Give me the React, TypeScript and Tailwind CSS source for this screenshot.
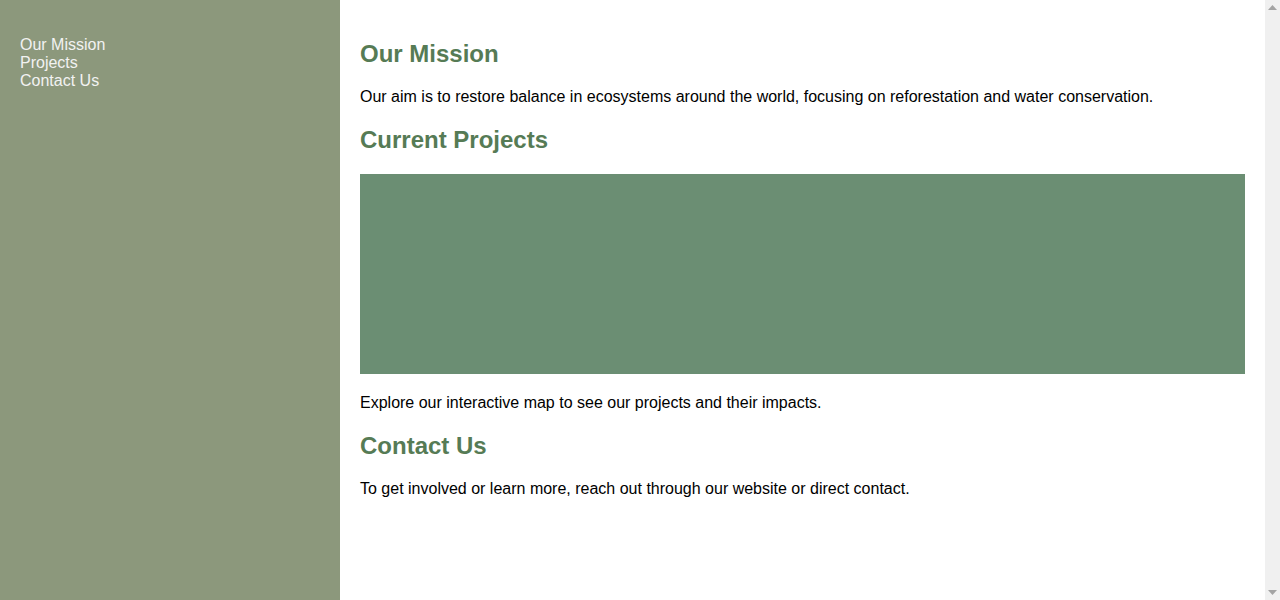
const NAV = ['Our Mission', 'Projects', 'Contact Us'];

export default function App() {
  return (
    <div className="flex h-screen bg-white font-['Liberation_Sans',Arial,sans-serif] text-base leading-[normal] text-black">
      {/* Sidebar */}
      <aside className="w-[340px] shrink-0 bg-[#8c987c] p-5">
        <ul className="my-4">
          {NAV.map((item) => (
            <li key={item}>
              <a href="#" className="text-[#f2f2f2]">
                {item}
              </a>
            </li>
          ))}
        </ul>
      </aside>

      {/* Content */}
      <main className="flex-1 p-5">
        <h2 className="my-[0.83em] text-2xl leading-[normal] font-bold text-[#567b55]">Our Mission</h2>
        <p className="my-4">
          Our aim is to restore balance in ecosystems around the world, focusing on reforestation and water conservation.
        </p>
        <h2 className="my-[0.83em] text-2xl leading-[normal] font-bold text-[#567b55]">Current Projects</h2>
        <div className="my-5 h-[200px] bg-[#6b8e73]" />
        <p className="my-4">Explore our interactive map to see our projects and their impacts.</p>
        <h2 className="my-[0.83em] text-2xl leading-[normal] font-bold text-[#567b55]">Contact Us</h2>
        <p className="my-4">
          To get involved or learn more, reach out through our website or direct contact.
        </p>
      </main>

      {/* Scrollbar gutter */}
      <div className="w-[15px] shrink-0 bg-[#f0f0f0] flex flex-col items-center justify-between py-[5px]">
        <svg width="9" height="5" viewBox="0 0 9 5">
          <polygon points="4.5,0 9,5 0,5" fill="#a3a3a3" />
        </svg>
        <svg width="9" height="5" viewBox="0 0 9 5">
          <polygon points="0,0 9,0 4.5,5" fill="#a3a3a3" />
        </svg>
      </div>
    </div>
  );
}
